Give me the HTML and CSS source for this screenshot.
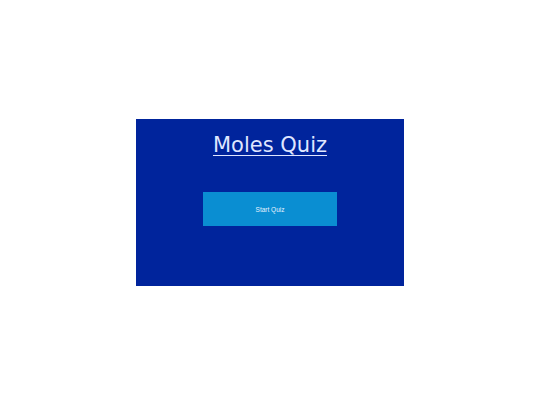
FILE: index.html
```html
<!DOCTYPE html>
<html>
<head>
<meta charset="utf-8">
<link rel="stylesheet" href="styles.css">
</head>
<body>
<div class="quiz">
  <h1 class="title">Moles Quiz</h1>
  <button class="start">Start Quiz</button>
</div>
</body>
</html>
```
FILE: styles.css
```css
html, body {
  margin: 0;
  padding: 0;
  background: #ffffff;
}
body {
  height: 100vh;
  display: flex;
  align-items: center;
  justify-content: center;
}
.quiz {
  width: 268px;
  height: 167px;
  background: #00249c;
  display: flex;
  flex-direction: column;
  align-items: center;
  box-sizing: border-box;
  padding-top: 13px;
}
.title {
  margin: 0;
  font-family: "DejaVu Sans", sans-serif;
  font-weight: normal;
  font-size: 21px;
  line-height: 26px;
  color: #dfe6ff;
  text-decoration: underline;
  text-decoration-thickness: 1px;
  text-underline-offset: 3px;
}
.start {
  margin-top: 34px;
  width: 134px;
  height: 34px;
  border: none;
  padding: 0;
  background: #0a8ed2;
  color: #e6f2ff;
  font-family: "Liberation Sans", Arial, sans-serif;
  font-size: 6.5px;
}
```
